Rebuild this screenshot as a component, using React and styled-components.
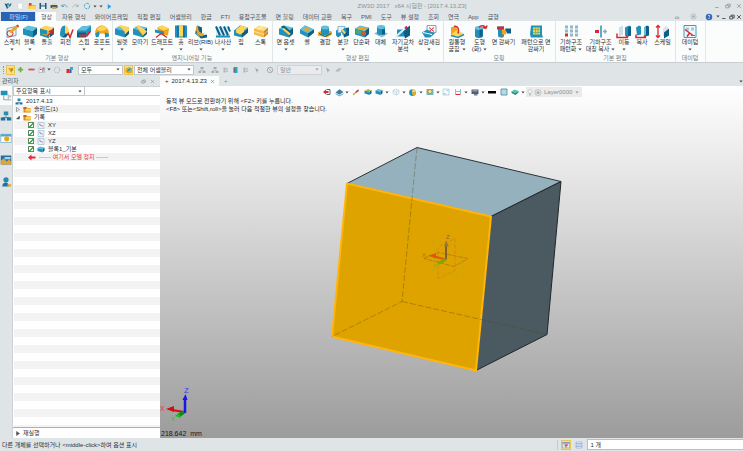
import React from "react";
import styled, { createGlobalStyle } from "styled-components";

const Global = createGlobalStyle`
  * { box-sizing: border-box; }
  body { margin: 0; overflow: hidden; }
  body, button, input, select {
    font-family: "Liberation Sans", "Noto Sans CJK KR", sans-serif;
    font-size: 6px;
    line-height: 8px;
    color: #2c2f33;
  }
  button { padding: 0; border: 0; background: none; }
`;

const Shell = styled.div`
  display: flex;
  flex-direction: column;
  height: 100vh;
  background: #dfe4e7;
`;

const TitleBar = styled.header`
  display: grid;
  grid-template-columns: 9fr auto 7fr;
  align-items: center;
  height: 12px;
  padding: 0 0 0 2px;
`;

const QuickBar = styled.div`
  display: flex;
  align-items: center;
  gap: ${(p) => p.$gap}px;
`;

const WindowTitle = styled.h1`
  margin: 0;
  font-size: 6px;
  font-weight: 400;
  color: #8d9297;
  white-space: pre;
`;

const WindowButtons = styled(QuickBar)`
  justify-content: flex-end;
`;

const IconButton = styled.button`
  display: flex;
  flex: none;
  align-items: center;
  justify-content: center;
  width: ${(p) => p.$w || 9}px;
  height: 10px;
  background: ${(p) => (p.$on ? "#fbe08a" : "none")};
  outline: ${(p) => (p.$on ? "1px solid #e8c558" : "0")};
  outline-offset: -1px;
  opacity: ${(p) => (p.$dim ? 0.55 : 1)};
`;

const MenuBar = styled.nav`
  display: flex;
  align-items: stretch;
  height: 9px;
  padding-left: 1px;
  white-space: nowrap;
`;

const MenuTab = styled.button`
  flex: none;
  padding: 0 4px 0 5px;
  color: #50565c;
`;

const FileTab = styled(MenuTab)`
  width: 34px;
  background: #2a63b5;
  color: #c7dcf7;
`;

const ActiveTab = styled(MenuTab)`
  margin: 0 1px;
  background: #fbfcfc;
`;

const MenuEnd = styled(QuickBar)`
  margin-left: auto;
`;

const Ribbon = styled.section`
  display: flex;
  height: 42px;
  padding-left: 3px;
  background: #fbfcfc;
  border-bottom: 1px solid #c9ced2;
  overflow: hidden;
`;

const Group = styled.div`
  display: flex;
  flex-direction: column;
  flex: none;
  padding: 3px 1px 0 0;
  border-right: 1px solid #e3e6e8;
`;

const Tools = styled.div`
  display: flex;
  height: 30px;
`;

const GroupName = styled.div`
  text-align: center;
  color: #777d83;
  white-space: nowrap;
`;

const ToolButton = styled.button`
  display: flex;
  flex: none;
  flex-direction: column;
  align-items: center;
  width: ${(p) => p.$w}px;
  line-height: 7px;
  white-space: nowrap;
`;

const ToolLine = styled.span`
  display: flex;
  align-items: center;
  gap: 2px;
  height: 7px;
`;

const ToolBar = styled.div`
  display: flex;
  align-items: center;
  gap: 1px;
  height: 13px;
  padding: 0 3px;
`;

const Grip = styled.span`
  width: 2px;
  height: 8px;
  border-left: 1px dotted #8f969c;
`;

const SelectBox = styled.label`
  position: relative;
  display: flex;
  flex: none;
  width: ${(p) => p.$w}px;
`;

const Select = styled.select`
  width: 100%;
  height: 10px;
  padding: 0 8px 0 2px;
  appearance: none;
  border: 1px solid ${(p) => (p.disabled ? "#cfd3d6" : "#c2c8cc")};
  border-radius: 0;
  background: ${(p) => (p.disabled ? "#e9ebec" : "#fff")};
  color: ${(p) => (p.disabled ? "#8b8f93" : "#2c2f33")};
  opacity: 1;
  line-height: 8px;
`;

const SelectMark = styled.span`
  position: absolute;
  right: 3px;
  top: 0;
  bottom: 0;
  display: flex;
  align-items: center;
  pointer-events: none;
`;

const Workspace = styled.main`
  display: flex;
  flex: 1;
  min-height: 0;
`;

const Manager = styled.aside`
  display: flex;
  flex-direction: column;
  flex: none;
  width: 160px;
`;

const ManagerHead = styled.div`
  display: flex;
  align-items: center;
  justify-content: space-between;
  height: 10px;
  padding: 0 3px 0 2px;
  color: #4d5358;
`;

const ManagerBody = styled.div`
  display: flex;
  flex: 1;
  min-height: 0;
`;

const Rail = styled.nav`
  display: flex;
  flex-direction: column;
  width: 14px;
  border-right: 1px solid #cdd2d5;
`;

const RailButton = styled.button`
  display: flex;
  align-items: center;
  justify-content: center;
  height: ${(p) => (p.$on ? 19 : 22)}px;
  background: ${(p) => (p.$on ? "#fafbfb" : "none")};
`;

const TreePanel = styled.div`
  display: flex;
  flex: 1;
  flex-direction: column;
  margin-right: 3px;
  background: #fff;
`;

const FilterRow = styled.div`
  display: flex;
`;

const FilterInput = styled.input`
  flex: 1;
  min-width: 0;
  height: 10px;
  border: 1px solid #ccd1d5;
  border-left: 0;
`;

const Tree = styled.ul`
  flex: 1;
  margin: 1px 1px 0;
  padding: 0;
  list-style: none;
  background: repeating-linear-gradient(#fff 0 8px, #f3f3f3 8px 16px);
`;

const TreeRow = styled.li`
  display: flex;
  align-items: center;
  gap: 3px;
  height: 8px;
  padding-left: ${(p) => p.$indent}px;
  color: ${(p) => (p.$alert ? "#ee3344" : "#2c2f33")};
  white-space: pre;
`;

const CheckLabel = styled.label`
  display: flex;
  align-items: center;
  gap: 3px;
`;

const Check = styled.input`
  width: 6px;
  height: 6px;
  margin: 0;
  appearance: none;
  border: 1px solid #5d8a62;
  background: #fff;
  &:checked {
    background: linear-gradient(135deg, #fff 40%, #3fae4c 41% 65%, #fff 66%);
  }
`;

const Replay = styled.button`
  display: flex;
  align-items: center;
  gap: 3px;
  height: 11px;
  padding-left: 3px;
  border-top: 1px solid #aab0b8;
  background: #fff;
`;

const DocArea = styled.section`
  display: flex;
  flex: 1;
  flex-direction: column;
  min-width: 0;
`;

const DocTabs = styled.div`
  display: flex;
  justify-content: space-between;
  height: 10px;
`;

const DocTab = styled.button`
  display: inline-flex;
  align-items: center;
  gap: 3px;
  height: 10px;
  padding: 0 4px 0 5px;
  background: #fbfcfc;
  white-space: nowrap;
`;

const NewTab = styled(DocTab)`
  background: none;
  color: #858b91;
`;

const Viewport = styled.div`
  position: relative;
  display: flex;
  flex: 1;
  flex-direction: column;
  min-height: 0;
  background: linear-gradient(#ffffff, #9c9c9c);
`;

const Scene = styled.svg`
  position: absolute;
  inset: 0;
  width: 100%;
  height: 100%;
`;

const Triad = styled.svg`
  width: 32px;
  height: 34px;
  margin-bottom: 9px;
`;

const ViewBar = styled.div`
  position: relative;
  display: flex;
  justify-content: center;
  align-items: center;
  height: 10px;
  margin-top: 1px;
`;

const Hint = styled.p`
  position: relative;
  margin: 0;
  padding: 0 6px;
  color: #1d1d1d;
  white-space: nowrap;
`;

const ViewFoot = styled.div`
  position: relative;
  display: flex;
  flex-direction: column;
  margin-top: auto;
`;

const Measure = styled.span`
  padding-left: 1px;
  font-size: 7px;
  line-height: 9px;
  color: #161616;
  white-space: pre;
`;

const LayerBox = styled.div`
  display: flex;
  align-items: center;
  height: 10px;
  margin-left: 1px;
  background: #ebebeb;
`;

const LayerSelect = styled(Select)`
  border: 0;
  background: none;
`;

const StatusBar = styled.footer`
  display: flex;
  align-items: center;
  height: 13px;
  padding-left: 2px;
  white-space: nowrap;
`;

const StatusTools = styled(QuickBar)`
  margin-left: auto;
  padding: 0 3px;
  border-left: 1px solid #c5cacd;
`;

const CommandInput = styled.input`
  width: 21%;
  height: 11px;
  padding: 0 2px;
  border: 1px solid #b9bfc4;
  border-right: 0;
  background: #fff;
`;

/* ---------- drawings ---------- */

const Arrow = ({ c = "#444" }) => (
  <svg width="4" height="3" viewBox="0 0 4 3"><path d="M.4.5h3.2L2 2.5z" fill={c} /></svg>
);
const Down = () => <IconButton $w={4} aria-label="더 보기"><Arrow /></IconButton>;

function Branch({ open, fill }) {
  return (
    <svg width="4" height="5" viewBox="0 0 4 5" aria-hidden="true">
      <path d={open ? "M3.5 1v3h-3z" : "M.5.5l3 2-3 2z"} fill={open || fill ? "#444" : "#fff"} stroke="#666" strokeWidth=".6" />
    </svg>
  );
}

const T = "#62bfdc", M = "#2191bb", D = "#0d5f86", Y = "#ffd457", O = "#eda51c", R = "#d8292f";

const Block = ({ top = T, left = M, right = D }) => (
  <g>
    <path d="M1 4 6 1 15 3 11 6.5z" fill={top} />
    <path d="M1 4 11 6.5V13L1 10z" fill={left} />
    <path d="M11 6.5 15 3v6.5L11 13z" fill={right} />
  </g>
);

const art = {
  sketch: <g><path d="M3 4l9-2v9l-9 2z" fill="#eaf3f9" stroke="#6da7cb" /><circle cx="6" cy="9" r="3" fill="none" stroke={R} /><path d="M5 7l7-6 2 2-7 6z" fill={O} /><path d="M12 1l2-1 1 2-1 1z" fill={R} /></g>,
  block: <Block />,
  extrude: <g><Block top={Y} left={O} /><path d="M1 4l7 2v4L1 9z" fill={M} /><path d="M1 9l9 3v2L1 11z" fill={M} /><path d="M8 12l6-6m0 0-4 1m4-1v4" stroke={R} strokeWidth="1.4" fill="none" /></g>,
  revolve: <g><path d="M2 11C2 4 4 1 7 1v8l-3 4z" fill={M} /><path d="M7 1c3 0 4 4 4 8l-4 0z" fill={Y} /><path d="M7 9h4l-3 4H4z" fill={D} /><path d="M10 8l2 5 3-8" stroke={R} strokeWidth="1.5" fill="none" /></g>,
  sweep: <g><path d="M1 6l5-4 9-1v6l-4 5H1z" fill={M} /><path d="M1 6h9l5-5-9 1z" fill={T} /><path d="M1 8h9v5H1z" fill={D} /><path d="M3 11h8l3-4" stroke={R} strokeWidth="2" fill="none" /></g>,
  loft: <g><path d="M1 8c1-5 4-7 7-7s6 2 7 7l-4 3c0-3-5-3-6 0z" fill={O} /><path d="M3 5c2-4 8-5 10-1-2 3-8 3-10 1z" fill={Y} /><path d="M1 9l4-2v5l-3 1z" fill={M} /><path d="M11 8l4 1v3l-4 1z" fill={M} /></g>,
  fillet: <g><Block /><path d="M4 2l3-1 5 1c2 0 4 2 3 4l-4 4c0-4-3-7-7-8z" fill={Y} /></g>,
  chamfer: <g><Block /><path d="M4 2l3-1 8 6-4 4z" fill={Y} /><path d="M4 2l7 9" stroke={O} /></g>,
  draft: <g><path d="M3 3l5-2 7 3-1 7-8-1z" fill={O} /><path d="M3 3l5-2 7 3-5 2z" fill={Y} /><path d="M1 5l9 2v3L1 8z" fill={M} /><path d="M2 13l5-4 6 4" stroke={R} strokeWidth="1.3" fill="none" /></g>,
  hole: <g><path d="M2 1h12v12H2z" fill={M} /><path d="M6 1h4v11H6z" fill={Y} /><path d="M5 1v12m6-12v12" stroke={D} /></g>,
  rib: <g><path d="M4 1l5 2v8l5-1v3l-6 1-6-5z" fill={D} /><path d="M5 1c0 5 1 8 7 8l-3 3C4 11 3 7 3 3z" fill={O} /><path d="M2 8l5 4" stroke={T} /></g>,
  thread: <g><path d="M1 2h14v11H1z" fill="#d5ecf6" /><path d="M1 2l4 9M5 2l4 9m0-9 4 9m0-9 2 5" stroke={D} strokeWidth="2" /><path d="M1 12h14" stroke={M} strokeWidth="2" /></g>,
  lip: <g><path d="M1 6l6-5 8 2v5l-6 5-8-2z" fill={M} /><path d="M3 5l5-4 7 2-4 3v2L7 10 3 8z" fill={Y} /><path d="M9 9l6-5v4l-6 5z" fill={D} /></g>,
  stock: <g><Block top="#ffdf83" left="#f3b943" right="#c98a1b" /><path d="M5 5l5-3M1 7l10 3 4-4" stroke="#fff" strokeWidth=".6" fill="none" /></g>,
  offset: <g><Block /><path d="M3 2l3-1 8 7-3 3z" fill={D} /><path d="M5 4l7 6" stroke={Y} strokeWidth="2.2" /></g>,
  shell: <g><path d="M1 5l5-4 9 4v3l-6 5-8-4z" fill={M} /><path d="M1 5l5-4 9 4-6 4z" fill={T} /><path d="M4 5l3-2 5 2-3 2z" fill={O} /><path d="M9 9l6-4v3l-6 5z" fill={D} /></g>,
  combine: <g><path d="M1 8l5-3 9 2v3l-5 3-9-2z" fill={O} /><path d="M4 3h8v6c-2 2-6 2-8 0z" fill={M} /><ellipse cx="8" cy="3" rx="4" ry="2" fill={T} /><path d="M2 9l6 3 6-3" stroke={D} fill="none" /></g>,
  divide: <g><path d="M1 6l5-3v8l-3 2-2-2z" fill={M} /><path d="M7 4l7-1v8l-5 2z" fill={D} /><path d="M3 2h7v6H3z" fill="#e6f3fa" stroke="#8bb6ce" /><path d="M6 6l4-3 2 4-4 4z" fill={M} /><path d="M7 5l3 4" stroke={Y} strokeWidth="2" /></g>,
  simplify: <g><Block /><path d="M3 4l4-2 6 2-3 2z" fill={O} /><path d="M7 6l5 1v4L7 10z" fill="#cb593c" /><path d="M2 5l5 1v4L2 9z" fill="#49a878" /></g>,
  replace: <g><path d="M1 9l6-3 8 3-6 4z" fill="#8dbfd4" /><path d="M4 2h8v7c-3 2-6 2-8 0z" fill={M} /><ellipse cx="8" cy="2.5" rx="4" ry="2" fill={T} /><path d="M9 5h3v5H9z" fill={D} /></g>,
  analyze: <g><path d="M2 5h11v7H2z" fill={M} /><path d="M8 6l7-5v10l-5 3z" fill={D} /><path d="M1 12l9-8" stroke="#d8f0fa" strokeWidth="2" /><path d="M10 4l2-2" stroke={R} strokeWidth="2" /></g>,
  emboss: <g><path d="M6 1h9v7H6z" fill="#f4f8fb" stroke="#8aa2b4" /><path d="M8 3l5 4m0-4L8 7" stroke={R} /><path d="M1 8l5-3 8 4-5 4H4z" fill={M} /><path d="M2 8l9 2" stroke="#fff" /></g>,
  bend: <g><path d="M2 3l5-2 2 7-5 4-2-2z" fill={O} /><path d="M2 10l5-4 8 3-5 4z" fill={Y} /><path d="M5 2c5-1 5 4 4 7" stroke={R} strokeWidth="1.5" fill="none" /><path d="M2 11l7 2 6-3" stroke={M} strokeWidth="1.5" fill="none" /></g>,
  morph: <g><path d="M3 3h8v9c-2 2-6 2-8 0z" fill={M} /><ellipse cx="7" cy="3.4" rx="4" ry="2" fill={T} /><path d="M9 5v7" stroke={D} strokeWidth="3" /><path d="M7 3c2-3 6-2 7 1m0 0-3-1m3 1 1-3" stroke={R} strokeWidth="1.5" fill="none" /></g>,
  wrap: <g><path d="M2 2h6v10H2z" fill={M} /><path d="M1 2h7v3H1z" fill={R} /><path d="M6 5h4v5H6z" fill={O} /><path d="M9 4h6v5h-4z" fill={D} /><path d="M2 12c2 1 5 1 6 0" stroke={T} /></g>,
  pattern: <g><path d="M3 1h11v9l1 3H3l-1-3z" fill={M} /><path d="M5 3h7v7H5z" fill="#e7d75c" /><path d="M5 5h7M5 8h7M7.5 3v7M10 3v7" stroke="#7fb866" /></g>,
  grid: <g>{[1, 5, 9].flatMap((y) => [3, 8, 13].map((x) => <rect key={x + "-" + y} x={x - 1} y={y} width="3" height="3" fill={x === 3 && y === 9 ? R : "#8fb8cd"} />))}</g>,
  mirror: <g><path d="M8 1v12" stroke="#62a9c5" strokeWidth="2" /><path d="M2 7h4" stroke={R} strokeWidth="3" /><path d="M10 7h4M12 5v4" stroke="#7db0c8" strokeWidth="1.6" /></g>,
  move: <g><path d="M3 3l4-2v9l-4 2z" fill="#cfdde5" /><path d="M9 3l4-2 2 1v9l-4 1-2-1z" fill={M} /><path d="M12 3l3-1v9l-3 1z" fill={D} /><path d="M1 9v4h11m-2-2 2 2" stroke={R} strokeWidth="1.5" fill="none" /></g>,
  copy: <g><path d="M2 3l3-2 2 1v8l-4 1z" fill={M} /><path d="M10 3l3-2 2 1v9l-4 1z" fill={D} /><path d="M10 3l2-1v9l-2-1z" fill={T} /><path d="M2 10v3h10m-2-2 2 2" stroke={R} strokeWidth="1.5" fill="none" /></g>,
  scale: <g><path d="M3 1v12M1 3l2-2 2 2M1 11l2 2 2-2" stroke={R} strokeWidth="1.3" fill="none" /><path d="M8 4l3-3 2 2v9H8z" fill="#dce5ea" /><path d="M9 8l5-4v7l-5 3z" fill={D} /></g>,
  datum: <g><path d="M2 1h12v12H2z" fill="#eef7fb" stroke="#3f9cbd" /><path d="M4 3h3v3H4zM9 3h3v3H9z" fill="#9ccbdd" /><path d="M3 5l8 6M8 8l-3 4" stroke={R} strokeWidth="1.5" /><path d="M9 11h4" stroke={M} /></g>,
  logo: <g><path d="M1 2l5 1 2 8-2 2L3 6z" fill="#135e80" /><path d="M15 1l-4 2-3 8 6-5z" fill="#1786a5" /><path d="M6 2h4L8 7z" fill="#254255" /></g>,
  file: <path d="M4 1h6l3 3v9H4z" fill="#fff" stroke="#c9d0d5" />,
  open: <g><path d="M1 3h6l1 2h7v8H1z" fill="#efb52a" /><path d="M2 1h5v5H2z" fill="#d6452d" /><path d="M4 7h12l-3 6H1z" fill={Y} /></g>,
  save: <g><path d="M1 1h14v12H1z" fill="#28546e" /><path d="M4 1h8v5H4z" fill="#b9e5f0" /><path d="M4 8h8v5H4z" fill="#e8f5fa" /></g>,
  print: <g><path d="M1 5h14v6H1z" fill="#535c62" /><path d="M4 1h9l-1 4H3z" fill="#d9dcca" /><path d="M4 9h9v4H4z" fill="#c2ac68" /></g>,
  undo: <path d="M2 6c4-5 10-3 12 3M2 3v4h5" fill="none" stroke="#4b9bb9" strokeWidth="2" />,
  redo: <path d="M14 6C10 1 4 3 2 9M14 3v4H9" fill="none" stroke="#a2aeb5" strokeWidth="2" />,
  ring: <circle cx="8" cy="7" r="5.5" fill="none" stroke="#47a9c9" strokeWidth="2" strokeDasharray="6 2" />,
  dotring: <circle cx="8" cy="7" r="5.5" fill="none" stroke="#8db8c8" strokeWidth="2" strokeDasharray="3 2" />,
  play: <path d="M4 1l8 6-8 6z" fill="#2a9ade" />,
  pick: <g><path d="M2 2l4 2 7-2-4 11-3-4z" fill="#e59a08" /><path d="M8 5l4 3" stroke="#68a84b" strokeWidth="3" /></g>,
  plus: <path d="M8 1v12M2 7h12" stroke="#74b235" strokeWidth="4" />,
  minus: <path d="M1 7h14" stroke="#cf4f55" strokeWidth="4" />,
  dots: <g><path d="M2 3h11v9H2z" fill="#edf1f4" stroke="#8ea0ad" /><path d="M4 6h3M8 9h3M8 5h4" stroke={R} strokeWidth="2" /><path d="M12 1v7" stroke="#6d8594" /></g>,
  colors: <g><path d="M1 5h6v8H1z" fill={R} /><path d="M7 5h4v8H7z" fill="#345e91" /><path d="M8 1h6v6H8z" fill="#39a9c4" /></g>,
  layers: <g><path d="M1 4l7-3 7 3v8l-7 2-7-2z" fill={O} /><path d="M4 4h8v6H4z" fill={T} /><path d="M5 9l6-5" stroke="#38712a" strokeWidth="2" /></g>,
  tree: <g><path d="M5 1h6v4H5zM1 9h5v4H1zM9 9h6v4H9z" fill="#777e84" /><path d="M8 5v3M3 8h10" stroke="#777e84" /></g>,
  column: <g><path d="M3 2h4v10H3z" fill="#8a9298" /><path d="M10 3v9" stroke="#596066" strokeWidth="2" strokeDasharray="2 1" /></g>,
  bluecolumn: <g><path d="M4 1h7v12H4z" fill="#1daac1" /><path d="M4 2v10" stroke={R} strokeWidth="2" /></g>,
  cursor: <path d="M4 2l8 6-3 1-1 4z" fill="#70777d" />,
  link: <path d="M2 11l5-6h7l-5 6z" fill="#9ba1a6" stroke="#787f85" />,
  no: <g><circle cx="8" cy="7" r="5.5" fill="none" stroke="#7e858b" strokeWidth="2" /><path d="M4 3l8 8" stroke="#7e858b" strokeWidth="2" /></g>,
  exit: <g><path d="M7 2h7v10H7" fill="none" stroke="#5b6570" strokeWidth="2" /><path d="M0 7l6-5v3h5v4H6v3z" fill={R} /></g>,
  views: <g><path d="M1 7l7-6 7 5-7 5z" fill="#397ea3" /><path d="M1 9l7 4 7-4" stroke="#71acc6" strokeWidth="2" fill="none" /></g>,
  brush: <g><path d="M3 12l7-9 4-1-1 4z" fill="#bc4a39" /><path d="M2 9l4 3-4 2z" fill={O} /></g>,
  wire: <path d="M2 4l5-3 7 3-5 3zM2 4v6l7 3V7m0 6 5-3V4" fill="#edf8fb" stroke="#9bbfcd" />,
  cup: <g><Block top={Y} left={M} right={D} /><path d="M5 3l4-1 3 2-3 2z" fill="#78b14c" /></g>,
  mix: <g><circle cx="8" cy="7" r="6" fill={M} /><path d="M8 1a6 6 0 0 1 6 5L7 8z" fill={Y} /><path d="M7 8l7-2a6 6 0 0 1-5 7z" fill={O} /></g>,
  zoom: <g><path d="M1 1h14v12H1z" fill="#6eb8bb" /><circle cx="8" cy="6" r="4" fill="#f3e8ae" stroke="#c88d2d" strokeWidth="2" /></g>,
  frame: <g><path d="M2 1h12v12H2z" fill="#f5fbfd" stroke="#77b4c7" /><path d="M3 10h3v3M9 4h4" stroke="#5d9db4" fill="none" /></g>,
  section: <g><path d="M3 1v10M13 1v10M3 6h10" stroke="#6aa9c2" strokeWidth="1.5" /><path d="M3 12h10" stroke={R} strokeWidth="2" /></g>,
  screen: <g><path d="M1 2h14v9H1z" fill="#555e75" /><path d="M3 3h10v3H3z" fill="#8e97ae" /><path d="M6 11h7v3H6z" fill="#777f93" /></g>,
  black: <path d="M0 5h16v5H0z" fill="#050505" />,
  swatch: <path d="M2 1h12v12H2z" fill="#a9dff2" stroke="#547887" strokeWidth="1.5" />,
  gem: <g><path d="M1 6l6-4 8 3-6 4z" fill="#4acda7" /><path d="M1 6l8 3 6-4v3l-6 5-8-4z" fill="#218689" /></g>,
  bulb: <g><circle cx="8" cy="5" r="4" fill="#f4f4f4" stroke="#afb3b6" /><path d="M6 9h4v4H6z" fill="#b9bcbe" /></g>,
  root: <g><path d="M5 1h6v5H5z" fill="#2b8bb2" /><path d="M8 6v3M3 9h10" stroke="#5c6d77" /><path d="M1 9h6v4H1zM9 9h6v4H9z" fill="#1c759c" /></g>,
  folder: <g><path d="M1 2h6l2 2h6v9H1z" fill="#df8e19" /><path d="M5 5h10v6H5z" fill={Y} /><path d="M1 2h5v4H1z" fill="#cf5b35" /></g>,
  plane: <g><path d="M2 1h12v12H2z" fill="#e8f4fa" stroke="#7eaec5" /><path d="M4 4l8 6M6 3v4h5" stroke="#bd6678" fill="none" /></g>,
  back: <path d="M0 7l7-6v4h8v4H7v4z" fill="#ec2435" />,
  history: <g><path d="M1 0h9v6H1z" fill={M} /><path d="M5 6v6h5M11 5v8" stroke="#77848c" fill="none" /><path d="M11 6h4v3h-4zM10 11h5v2h-5z" fill="#bec8ce" /></g>,
  image: <g><path d="M1 1h14v12H1z" fill="#2b6ba0" /><path d="M1 8l4-3 4 4 3-3 3 3v4H1z" fill="#dda53b" /><path d="M6 3h8v3H6z" fill="#9ed8e6" /></g>,
  camera: <g><path d="M1 2h14v11H1z" fill="#fff" stroke="#69b3ce" /><path d="M1 2h14v3H1z" fill="#4aa8ce" /><circle cx="9" cy="8" r="3.5" fill={O} /></g>,
  person: <g><circle cx="8" cy="4" r="3.5" fill="#2388b4" /><path d="M3 13c0-7 9-7 9 0z" fill="#1775a5" /><path d="M10 10h5v3h-5z" fill={O} /></g>,
  bubble: <g><path d="M2 9c0-5 9-6 12-1v4H2z" fill="#a9b0b5" /><path d="M5 8h5" stroke="#eef1f3" strokeWidth="2" /></g>,
  globe: <g><circle cx="8" cy="7" r="6" fill="none" stroke="#91989d" /><circle cx="8" cy="7" r="3" fill="#a9b0b5" /></g>,
  help: <g><circle cx="8" cy="7" r="6.5" fill="#336bb5" /><path d="M6 5c1-3 5-1 3 1L8 8m0 1v2" stroke="#fff" strokeWidth="1.5" fill="none" /></g>,
  min: <path d="M3 11h9" stroke="currentColor" strokeWidth="2" />,
  max: <path d="M2 5h8v7H2zM6 5V2h8v7h-4" fill="none" stroke="currentColor" strokeWidth="2" />,
  close: <path d="M3 2l10 10M13 2L3 12" stroke="currentColor" strokeWidth="2" />,
  table: <g><path d="M2 1h12v12H2z" fill="#e5eef9" stroke="#7c9fcc" /><path d="M2 4h12M2 7h12M2 10h12" stroke="#678fc5" /></g>,
  textbox: <g><path d="M1 2h14v11H1z" fill="#dce8f5" stroke="#8296aa" /><path d="M1 3h14" stroke="#4b82b4" strokeWidth="2" /><path d="M5 7h7M8 7v5" stroke="#ba3838" strokeWidth="2" /></g>,
};

const Icon = ({ name, w = 8, h = 7, c }) => (
  <svg width={w} height={h} viewBox="0 0 16 14" color={c} aria-hidden="true">{art[name]}</svg>
);
const Small = ({ name, label, s = 8, c, ...rest }) => (
  <IconButton aria-label={label} {...rest}><Icon name={name} w={s} h={s} c={c} /></IconButton>
);

const Combo = ({ label, value, w, disabled }) => (
  <SelectBox $w={w}>
    <Select aria-label={label} disabled={disabled}><option>{value}</option></Select>
    <SelectMark><Arrow c={disabled ? "#999" : "#444"} /></SelectMark>
  </SelectBox>
);

/* icon, first line, width, second line, has menu */
const groups = [
  ["기본 형상", [["sketch", "스케치", 18, "", 1], ["block", "블록", 17, "", 1], ["extrude", "돌출", 18], ["revolve", "회전", 19], ["sweep", "스윕", 18, "", 1], ["loft", "로프트", 18, "", 1]]],
  ["엔지니어링 기능", [["fillet", "필렛", 18, "", 1], ["chamfer", "모따기", 18], ["draft", "드래프트", 26, "", 1], ["hole", "홈", 12, "", 1], ["rib", "리브(RIB)", 27, "", 1], ["thread", "나사산", 18, "", 1], ["lip", "립", 18], ["stock", "스톡", 21]]],
  ["형상 편집", [["offset", "면 옵셋", 25, "", 1], ["shell", "쉘", 18], ["combine", "결합", 18], ["divide", "분할", 18, "", 1], ["simplify", "단순화", 19], ["replace", "대체", 19], ["analyze", "자기교차", 26, "분석"], ["emboss", "상감새김", 26, "", 1]]],
  ["모핑", [["bend", "원통형", 26, "굽힘", 1], ["morph", "도형", 19, "(화)", 1], ["wrap", "면 감싸기", 29], ["pattern", "패턴으로 면", 36, "감싸기"]]],
  ["기본 편집", [["grid", "기하구조", 30, "패턴화", 1], ["mirror", "기하구조", 29, "대칭 복사", 1], ["move", "이동", 18, "", 1], ["copy", "복사", 18], ["scale", "스케일", 23]]],
  ["데이텀", [["datum", "데이텀", 28, "", 1]]],
];

const menus = ["자유 형식", "와이어프레임", "직접 편집", "어셈블리", "판금", "FTI", "용접구조물", "면 힐링", "데이터 교환", "복구", "PMI", "도구", "뷰 설정", "조회", "연극", "App", "금형"];

const Tool = ({ icon, name, w, more, menu }) => (
  <ToolButton $w={w}>
    <Icon name={icon} w={16} h={15} />
    <ToolLine>{name}</ToolLine>
    <ToolLine>{more}{menu ? <Arrow /> : null}</ToolLine>
  </ToolButton>
);

const Model = () => (
  <Scene viewBox="160 87 583 351" role="img" aria-label="블록 모델">
    <path d="M347 184 417 148 561 182 491 217z" fill="#95b1bd" stroke="#2b3439" />
    <path d="M491 217 561 182 547 335 476 371z" fill="#4b5a61" stroke="#1e272c" />
    <path d="M347 184 491 217 476 371 332 337z" fill="#dfa300" stroke="#ffb50a" strokeWidth="2" strokeLinejoin="round" />
    <path d="M417 148 402 302 332 337M402 302 547 335" fill="none" stroke="#4b4218" strokeOpacity=".45" strokeWidth=".8" strokeDasharray="6 2" />
    <path d="M434 240l29 8v31l-29-8z" fill="none" stroke="#b0ae00" strokeWidth=".6" strokeDasharray="3 2" />
    <path d="M424 259l14-6 30 6-14 8z" fill="none" stroke="#a2761a" strokeWidth=".7" strokeDasharray="5 1" />
    <path d="M455 239v32l-17 8V247z" fill="none" stroke="#d07a12" strokeWidth=".6" strokeDasharray="4 2" />
    <path d="M446 260V244" stroke="#805f35" strokeWidth="2" />
    <path d="M444 247l2-6 3 6z" fill="#9c7540" />
    <path d="M446 260l-12-3" stroke="#d85b09" strokeWidth="2" />
    <path d="M428 256l8-2v5z" fill="#d85b09" />
    <path d="M446 260l-8 4" stroke="#7ca800" strokeWidth="3" />
    <text x="422" y="257" fontSize="6" fill="#d46208">X</text>
    <text x="446" y="239" fontSize="6" fill="#8b6844">Z</text>
    <text x="433" y="268" fontSize="5" fill="#7ca800">Y</text>
  </Scene>
);

export default function App() {
  return (
    <Shell>
      <Global />
      <TitleBar>
        <QuickBar $gap={2}>
          <Small name="logo" label="ZW3D" $w={11} />
          <Small name="file" label="새 파일" $w={10} />
          <Small name="open" label="열기" />
          <Small name="save" label="저장" />
          <Small name="print" label="인쇄" />
          <Small name="undo" label="실행 취소" s={7} />
          <Small name="redo" label="다시 실행" s={7} />
          <Small name="ring" label="재생성" />
          <Down /><Down />
          <Small name="play" label="실행" s={7} />
        </QuickBar>
        <WindowTitle>ZW3D 2017   x64 시험판 - [2017.4.13.Z3]</WindowTitle>
        <WindowButtons $gap={2}>
          <Small name="min" label="최소화" s={6} c="#8d9297" />
          <Small name="max" label="최대화" s={6} c="#8d9297" />
          <Small name="close" label="닫기" s={6} c="#8d9297" />
        </WindowButtons>
      </TitleBar>
      <MenuBar>
        <FileTab>파일(F)</FileTab>
        <ActiveTab>형상</ActiveTab>
        {menus.map((m) => <MenuTab key={m}>{m}</MenuTab>)}
        <MenuEnd $gap={0}>
          <Small name="bubble" label="메시지" s={6} $w={17} />
          <Small name="globe" label="온라인" s={7} $w={17} />
          <Small name="help" label="도움말" $w={14} />
          <Down />
          <Small name="min" label="문서 최소화" s={6} $w={8} />
          <Small name="max" label="문서 복원" s={6} $w={7} />
          <Small name="close" label="문서 닫기" s={6} $w={8} />
        </MenuEnd>
      </MenuBar>
      <Ribbon>
        {groups.map(([title, tools]) => (
          <Group key={title}>
            <Tools>
              {tools.map(([icon, name, w, more, menu]) => (
                <Tool key={icon} icon={icon} name={name} w={w} more={more} menu={menu} />
              ))}
            </Tools>
            <GroupName>{title}</GroupName>
          </Group>
        ))}
      </Ribbon>
      <ToolBar>
        <Grip />
        <Small name="pick" label="선택" $on />
        <Small name="plus" label="추가" s={7} />
        <Small name="minus" label="제거" s={7} $w={10} />
        <Small name="dots" label="필터" />
        <Down />
        <Small name="dotring" label="범위" $w={10} />
        <Small name="colors" label="색상" $w={14} />
        <Combo label="선택 필터" value="모두" w={45} />
        <Small name="layers" label="어셈블리" $on />
        <Combo label="선택 범위" value="전체 어셈블리" w={60} />
        <Small name="tree" label="상위" $w={14} $dim />
        <Small name="tree" label="하위" $w={10} $dim />
        <Small name="column" label="목록" $dim />
        <Small name="bluecolumn" label="강조" />
        <Small name="column" label="정렬" $dim />
        <Small name="cursor" label="커서" $w={12} $dim />
        <Small name="no" label="해제" $w={12} $dim />
        <Combo label="유형" value="일반" w={45} disabled />
        <Small name="cursor" label="선택 도구" $dim />
        <Small name="link" label="연결" $w={10} s={7} $dim />
      </ToolBar>
      <Workspace>
        <Manager>
          <ManagerHead>
            <span>관리자</span>
            <QuickBar $gap={0}>
              <Small name="max" label="분리" s={5} c="#8d9297" />
              <Small name="close" label="관리자 닫기" s={5} c="#8d9297" />
            </QuickBar>
          </ManagerHead>
          <ManagerBody>
            <Rail>
              <RailButton $on aria-label="히스토리"><Icon name="history" w={12} h={12} /></RailButton>
              <RailButton aria-label="어셈블리"><Icon name="root" w={12} h={12} /></RailButton>
              <RailButton aria-label="뷰"><Icon name="camera" w={12} h={12} /></RailButton>
              <RailButton aria-label="비주얼"><Icon name="image" w={12} h={12} /></RailButton>
              <RailButton aria-label="역할"><Icon name="person" w={12} h={12} /></RailButton>
            </Rail>
            <TreePanel>
              <FilterRow>
                <Combo label="표시 항목" value="주요항목 표시" w={72} />
                <FilterInput aria-label="검색" />
              </FilterRow>
              <Tree>
                <TreeRow $indent={1}><Icon name="root" />2017.4.13</TreeRow>
                <TreeRow $indent={2}><Branch /><Icon name="folder" />솔리드(1)</TreeRow>
                <TreeRow $indent={2}><Branch open /><Icon name="folder" />기록</TreeRow>
                {["XY", "XZ", "YZ"].map((n) => (
                  <TreeRow key={n} $indent={14}>
                    <CheckLabel><Check type="checkbox" defaultChecked /><Icon name="plane" />{n}</CheckLabel>
                  </TreeRow>
                ))}
                <TreeRow $indent={14}>
                  <CheckLabel><Check type="checkbox" defaultChecked /><Icon name="block" />블록1_기본</CheckLabel>
                </TreeRow>
                <TreeRow $indent={14} $alert><Icon name="back" />------ 여기서 모델 정지 ------</TreeRow>
              </Tree>
              <Replay><Branch fill />재실행</Replay>
            </TreePanel>
          </ManagerBody>
        </Manager>
        <DocArea>
          <DocTabs>
            <div>
              <DocTab><span>+</span>2017.4.13.Z3<Icon name="close" w={5} h={5} c="#96804a" /></DocTab>
              <NewTab aria-label="새 탭">+</NewTab>
            </div>
            <Down />
          </DocTabs>
          <Viewport>
            <Model />
            <ViewBar>
              <Small name="exit" label="나가기" $w={12} />
              <Small name="views" label="뷰" s={9} $w={12} /><Down />
              <Small name="brush" label="브러시" $w={13} />
              <Small name="cup" label="재질" $w={11} />
              <Small name="block" label="음영" $w={12} /><Down />
              <Small name="wire" label="와이어프레임" $w={13} /><Down />
              <Small name="mix" label="표시 모드" s={9} $w={13} /><Down />
              <Small name="zoom" label="확대" $w={13} /><Down />
              <Small name="frame" label="맞춤" $w={12} />
              <Small name="section" label="단면" $w={12} /><Down />
              <Small name="screen" label="화면" $w={13} /><Down />
              <Small name="black" label="선 색" $w={13} />
              <Small name="swatch" label="면 색" $w={11} />
              <Small name="gem" label="재료" $w={12} /><Down />
              <LayerBox>
                <Icon name="bulb" /><Icon name="globe" />
                <SelectBox $w={40}>
                  <LayerSelect aria-label="레이어" disabled><option>Layer0000</option></LayerSelect>
                  <SelectMark><Arrow c="#999" /></SelectMark>
                </SelectBox>
              </LayerBox>
            </ViewBar>
            <Hint>동적 뷰 모드로 전환하기 위해 &lt;F2&gt; 키를 누릅니다.</Hint>
            <Hint>&lt;F8&gt; 또는&lt;Shift,roll&gt;을 눌러 다음 적절한 뷰의 설정을 찾습니다.</Hint>
            <ViewFoot>
              <Triad viewBox="160 386 32 34" role="img" aria-label="좌표축" overflow="visible">
                <path d="M185 413V398" stroke="#1717e8" strokeWidth="2.5" />
                <path d="M182.5 400l3-6 2 6z" fill="#1717e8" />
                <path d="M184 412l-12-2" stroke="#d40d0d" strokeWidth="2" />
                <path d="M166 409l8-3v6z" fill="#d40d0d" />
                <path d="M184 412l-6 4" stroke="#0b8c16" strokeWidth="3.5" />
                <path d="M175 416l4-3 2 5z" fill="#0ac90a" />
                <text x="160" y="411" fontSize="7" fill="#e33">X</text>
                <text x="184" y="393" fontSize="8" fill="#3a3ae0">Z</text>
                <text x="171" y="421" fontSize="6" fill="#1bbd1b">Y</text>
              </Triad>
              <Measure>218.642  mm</Measure>
            </ViewFoot>
          </Viewport>
        </DocArea>
      </Workspace>
      <StatusBar>
        <span>다른 개체를 선택하거나 &lt;middle-click&gt;하여 옵션 표시</span>
        <StatusTools $gap={3}>
          <Small name="textbox" label="메시지 창" $on $w={10} />
          <Small name="table" label="출력 창" $w={10} />
        </StatusTools>
        <CommandInput aria-label="명령" defaultValue="1 개" />
      </StatusBar>
    </Shell>
  );
}
